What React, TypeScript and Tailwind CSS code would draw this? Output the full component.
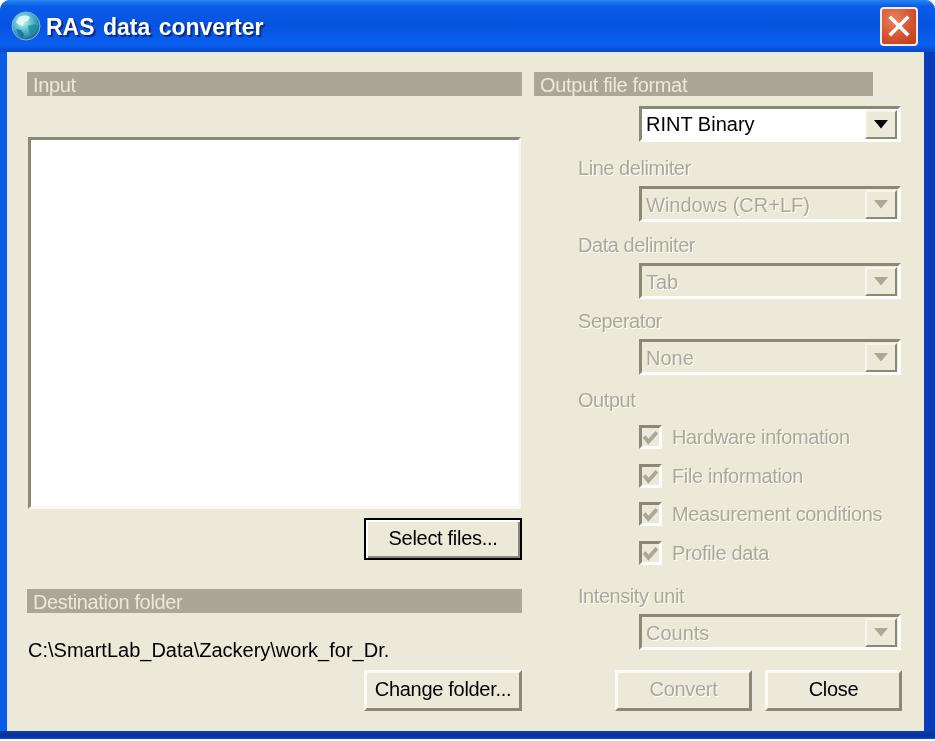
import React from 'react';

const font = 'font-["Liberation_Sans",Arial,sans-serif]';

function GlobeIcon() {
  return (
    <svg width="30" height="30" viewBox="0 0 30 30" className="shrink-0">
      <defs>
        <radialGradient id="globe" cx="0.4" cy="0.35" r="0.7">
          <stop offset="0" stopColor="#c9f4f2" />
          <stop offset="0.5" stopColor="#4fb9c9" />
          <stop offset="1" stopColor="#165c8c" />
        </radialGradient>
      </defs>
      <circle cx="15" cy="15" r="14" fill="url(#globe)" stroke="#7fb4e0" strokeWidth="1" />
      <path d="M8 6c4-2 8-2 11 0l-2 4-4 1-1 4-4-1-3-3z" fill="#e6fbf8" opacity="0.85" />
      <path d="M17 15l7-2 3 3-3 6-4 3-2-5z" fill="#1f8a9c" opacity="0.8" />
      <path d="M5 18l5 1 3 4-1 4-4-3z" fill="#0f6e8c" opacity="0.8" />
    </svg>
  );
}

function CloseButton() {
  return (
    <button className="flex h-[39px] w-[38px] items-center justify-center rounded-[4px] border-2 border-[#f4ece8] bg-[radial-gradient(circle_at_35%_30%,#e8805c,#d4502c_60%,#bb3a18)]">
      <svg width="24" height="24" viewBox="0 0 24 24">
        <path d="M4 4l16 16M20 4L4 20" stroke="#fff" strokeWidth="3.6" strokeLinecap="square" />
      </svg>
    </button>
  );
}

function SectionBar({ label, className }: { label: string; className?: string }) {
  return (
    <div className={`h-6 bg-[#aaa797] pl-[6px] pt-[1px] text-[20px] leading-6 tracking-[-0.35px] text-[#ece9d8] ${className ?? ''}`}>
      {label}
    </div>
  );
}

function ComboBox({ value, disabled }: { value: string; disabled?: boolean }) {
  return (
    <div
      className={`ml-[105px] flex h-9 w-[262px] items-center justify-between border-[3px] border-t-[#8b8876] border-r-[#fdfdfb] border-b-[#fdfdfb] border-l-[#8b8876] pl-[4px] pr-[1px] text-[20px] ${
        disabled ? 'bg-[#ece9d8] text-[#aca899] [text-shadow:1px_1px_0_#fff]' : 'bg-white text-black'
      }`}
    >
      <span className={disabled ? 'pt-[2px]' : ''}>{value}</span>
      <span className="flex h-[29px] w-[32px] items-center justify-center border-2 border-t-[#f7f5ec] border-r-[#8b8876] border-b-[#8b8876] border-l-[#f7f5ec] bg-[#ece9d8]">
        <svg width="16" height="9" viewBox="0 0 16 9">
          <path d="M1 0h14L8 8.5z" fill={disabled ? '#aca899' : '#000'} />
        </svg>
      </span>
    </div>
  );
}

function FieldLabel({ label, className }: { label: string; className: string }) {
  return (
    <div className={`ml-[44px] h-6 text-[20px] leading-6 tracking-[-0.45px] text-[#aca899] [text-shadow:1px_1px_0_#fff] ${className}`}>
      {label}
    </div>
  );
}

function DisabledCheck({ label, className }: { label: string; className?: string }) {
  return (
    <div className={`ml-[105px] flex h-6 items-center ${className ?? ''}`}>
      <span className="flex h-6 w-[23px] shrink-0 items-center justify-center border-[3px] border-t-[#8b8876] border-r-[#fdfdfb] border-b-[#fdfdfb] border-l-[#8b8876] bg-[#ece9d8]">
        <svg width="17" height="15" viewBox="0 0 16 14">
          <path d="M2 6l4 5 8-9" fill="none" stroke="#aca899" strokeWidth="3.6" />
        </svg>
      </span>
      <span className="ml-[10px] whitespace-nowrap text-[20px] leading-6 tracking-[-0.35px] text-[#aca899] [text-shadow:1px_1px_0_#fff]">
        {label}
      </span>
    </div>
  );
}

function PushButton({
  label,
  disabled,
  focused,
  className,
}: {
  label: string;
  disabled?: boolean;
  focused?: boolean;
  className: string;
}) {
  return (
    <button
      className={`flex items-center justify-center whitespace-nowrap bg-[#ece9d8] pb-[3px] text-[20px] tracking-[-0.3px] ${
        focused
          ? 'border-2 border-black shadow-[inset_2px_2px_0_#fff,inset_-2px_-2px_0_#8b8876]'
          : 'border-[3px] border-t-[#fbfaf5] border-r-[#8b8876] border-b-[#8b8876] border-l-[#fbfaf5]'
      } ${disabled ? 'text-[#aca899] [text-shadow:1px_1px_0_#fff]' : 'text-black'} ${className}`}
    >
      {label}
    </button>
  );
}

export default function App() {
  return (
    <div className={`h-[741px] w-[935px] overflow-hidden bg-white ${font} blur-[0.4px]`}>
      <div className="flex h-[739px] flex-col rounded-t-[10px] bg-[linear-gradient(90deg,#0a5ce6_0%,#0a48d2_50%,#0a3cb8_100%)] pl-[7px] pr-[11px]">
        <div className="-ml-[7px] -mr-[11px] flex h-[52px] shrink-0 items-center justify-between rounded-t-[10px] bg-[linear-gradient(180deg,#2a86f0_0%,#0a5ce8_12%,#0653e0_50%,#0a60f0_85%,#0848c8_100%)] pl-[11px] pr-[17px]">
          <div className="flex items-center gap-[5px]">
            <GlobeIcon />
            <span className="pt-[3px] text-[23px] font-bold text-white [word-spacing:2px] [text-shadow:2px_2px_1px_#0a2a80]">
              RAS data converter
            </span>
          </div>
          <CloseButton />
        </div>

        <div className="flex flex-1 gap-3 border-t border-l border-[#dbe6f6] bg-[#ece9d8] pl-[19px] pt-[19px]">
          <div className="flex w-[495px] flex-col">
            <SectionBar label="Input" />
            <div className="mx-[1px] mt-[41px] h-[372px] border-[3px] border-t-[#8b8876] border-r-[#f8f7f0] border-b-[#f8f7f0] border-l-[#8b8876] bg-white" />
            <PushButton label="Select files..." focused className="mt-[9px] h-[42px] w-[158px] self-end" />
            <SectionBar label="Destination folder" className="mt-[29px]" />
            <div className="ml-[1px] mt-[25px] h-6 text-[20px] leading-6 text-black">C:\SmartLab_Data\Zackery\work_for_Dr.</div>
            <PushButton label="Change folder..." className="mt-2 h-[41px] w-[158px] self-end" />
          </div>

          <div className="flex flex-col">
            <SectionBar label="Output file format" className="w-[339px]" />
            <div className="mt-[10px]">
              <ComboBox value="RINT Binary" />
            </div>
            <FieldLabel label="Line delimiter" className="mb-[6px] mt-[14px]" />
            <ComboBox value="Windows (CR+LF)" disabled />
            <FieldLabel label="Data delimiter" className="mb-[6px] mt-[11px]" />
            <ComboBox value="Tab" disabled />
            <FieldLabel label="Seperator" className="mb-[6px] mt-[10px]" />
            <ComboBox value="None" disabled />
            <FieldLabel label="Output" className="mb-[13px] mt-[13px]" />
            <DisabledCheck label="Hardware infomation" />
            <DisabledCheck label="File information" className="mt-[15px]" />
            <DisabledCheck label="Measurement conditions" className="mt-[14px]" />
            <DisabledCheck label="Profile data" className="mt-[15px]" />
            <FieldLabel label="Intensity unit" className="mb-[6px] mt-[19px]" />
            <ComboBox value="Counts" disabled />
            <div className="ml-[81px] mt-5 flex gap-[13px]">
              <PushButton label="Convert" disabled className="h-[41px] w-[137px]" />
              <PushButton label="Close" className="h-[41px] w-[137px]" />
            </div>
          </div>
        </div>
        <div className="-ml-[7px] -mr-[11px] h-2 shrink-0 bg-[linear-gradient(180deg,#0a3cb8,#08308f_60%,#0a48d2)]" />
      </div>
    </div>
  );
}
